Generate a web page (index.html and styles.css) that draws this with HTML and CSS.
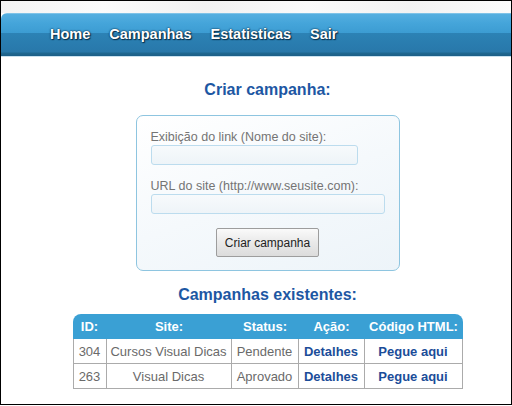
FILE: index.html
```html
<!DOCTYPE html>
<html lang="pt">
<head>
<meta charset="utf-8">
<title>Campanhas</title>
<link rel="stylesheet" href="styles.css">
</head>
<body>
<div class="frame">
  <div class="topstrip"></div>
  <nav class="nav">
    <a class="nav-link" href="#">Home</a>
    <a class="nav-link" href="#">Campanhas</a>
    <a class="nav-link" href="#">Estatisticas</a>
    <a class="nav-link" href="#">Sair</a>
  </nav>
  <main class="main">
    <h2 class="title title-first">Criar campanha:</h2>
    <form class="form-box">
      <label class="label" for="nome">Exibição do link (Nome do site):</label>
      <input class="input input-short" id="nome" type="text">
      <label class="label label-gap" for="url">URL do site (http://www.seusite.com):</label>
      <input class="input input-long" id="url" type="text">
      <div class="actions">
        <button class="button" type="button">Criar campanha</button>
      </div>
    </form>
    <h2 class="title title-second">Campanhas existentes:</h2>
    <table class="table">
      <thead>
        <tr>
          <th class="c-id">ID:</th>
          <th class="c-site">Site:</th>
          <th class="c-status">Status:</th>
          <th class="c-acao">Ação:</th>
          <th class="c-code">Código HTML:</th>
        </tr>
      </thead>
      <tbody>
        <tr>
          <td>304</td>
          <td>Cursos Visual Dicas</td>
          <td>Pendente</td>
          <td><a class="link" href="#">Detalhes</a></td>
          <td><a class="link" href="#">Pegue aqui</a></td>
        </tr>
        <tr>
          <td>263</td>
          <td>Visual Dicas</td>
          <td>Aprovado</td>
          <td><a class="link" href="#">Detalhes</a></td>
          <td><a class="link" href="#">Pegue aqui</a></td>
        </tr>
      </tbody>
    </table>
  </main>
</div>
</body>
</html>
```
FILE: styles.css
```css
* { box-sizing: border-box; }

html, body {
  margin: 0;
  padding: 0;
  background: #ffffff;
}

body {
  font-family: "Liberation Sans", Arial, sans-serif;
}

.frame {
  width: 512px;
  height: 405px;
  border: 1px solid #000;
  background: #fff;
  overflow: hidden;
}

.topstrip {
  height: 12px;
  background: linear-gradient(90deg, #f3f3f3 0%, #fbfbfb 20%, #f1f1f1 40%, #fafafa 60%, #f2f2f2 80%, #fbfbfb 100%);
}

.nav {
  height: 44px;
  display: flex;
  align-items: center;
  padding: 0 0 1px 49px;
  border-top-left-radius: 6px;
  border-bottom: 1px solid #c9e2f0;
  background: linear-gradient(#a8d6ef 0px, #55afe0 1px, #45a5da 10px, #3c9cd2 20px, #2c82b5 20px, #2878aa 39px, #1f6891 40px, #1c5f87 43px);
}

.nav-link {
  color: #fff;
  text-decoration: none;
  font-weight: bold;
  font-size: 14.5px;
  margin-right: 19px;
  text-shadow: 0 0 2px #082f4a, 1px 1px 1px #082f4a, 0 0 1px #082f4a;
}

.main {
  padding-left: 23px;
}

.title {
  margin: 0;
  font-size: 16px;
  line-height: 18px;
  font-weight: bold;
  color: #1d57a3;
  text-align: center;
}

.title-first { margin-top: 24px; }
.title-second { margin-top: 15px; }

.form-box {
  width: 264px;
  height: 156px;
  margin: 16px auto 0;
  padding: 14px 14px 13px;
  border: 1px solid #8ec5e0;
  border-radius: 7px;
  background: linear-gradient(160deg, #ffffff 0%, #f5f9fc 50%, #edf4f9 100%);
}

.label {
  display: block;
  font-size: 12.5px;
  line-height: 15px;
  color: #747474;
}

.label-gap { margin-top: 14px; }

.input {
  display: block;
  height: 20px;
  margin: 0;
  border: 1px solid #bcdcee;
  border-radius: 3px;
  background: linear-gradient(#f7fafc, #eef4f8);
}

.input-short { width: 207px; }
.input-long { width: 234px; }

.actions {
  margin-top: 14px;
  text-align: center;
}

.button {
  width: 103px;
  height: 29px;
  padding: 0;
  font-family: "Liberation Sans", Arial, sans-serif;
  font-size: 12px;
  color: #222;
  border: 1px solid #9d9d9d;
  border-radius: 2px;
  background: linear-gradient(#fafafa, #e9e9e9 50%, #dcdcdc);
}

.table {
  margin: 10px auto 0;
  width: 390px;
  table-layout: fixed;
  border-collapse: separate;
  border-spacing: 0;
}

.table th {
  height: 25px;
  padding: 0;
  background: #3aa0d4;
  color: #fff;
  font-size: 13px;
  font-weight: bold;
  text-align: center;
}

.table th:first-child { border-top-left-radius: 8px; }
.table th:last-child { border-top-right-radius: 8px; }

.c-id { width: 34px; }
.c-site { width: 125px; }
.c-status { width: 67px; }
.c-acao { width: 66px; }
.c-code { width: 98px; }

.table td {
  height: 25px;
  padding: 0;
  font-size: 13px;
  color: #6a6a6a;
  text-align: center;
  white-space: nowrap;
  border-right: 1px solid #ababab;
  border-bottom: 1px solid #ababab;
}

.table td:first-child { border-left: 1px solid #ababab; }

.link {
  color: #1b4d99;
  font-weight: bold;
  font-size: 13px;
  text-decoration: none;
}
```
